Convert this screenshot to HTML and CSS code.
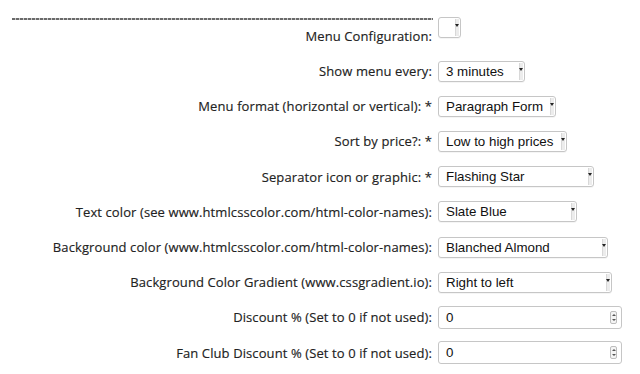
FILE: index.html
```html
<!DOCTYPE html>
<html>
<head>
<meta charset="utf-8">
<link rel="stylesheet" href="styles.css">
</head>
<body>
<div class="form">
  <div class="row first">
    <div class="label">
      <div class="dashes"></div>
      <div class="text">Menu Configuration:</div>
    </div>
    <div class="control"><div class="select" style="width:23px"><span class="val"></span><span class="arrow"><i></i></span></div></div>
  </div>
  <div class="row">
    <div class="label"><div class="text">Show menu every:</div></div>
    <div class="control"><div class="select" style="width:87px"><span class="val">3 minutes</span><span class="arrow"><i></i></span></div></div>
  </div>
  <div class="row">
    <div class="label"><div class="text">Menu format (horizontal or vertical): *</div></div>
    <div class="control"><div class="select" style="width:118px"><span class="val">Paragraph Form</span><span class="arrow"><i></i></span></div></div>
  </div>
  <div class="row">
    <div class="label"><div class="text">Sort by price?: *</div></div>
    <div class="control"><div class="select" style="width:129px"><span class="val">Low to high prices</span><span class="arrow"><i></i></span></div></div>
  </div>
  <div class="row">
    <div class="label"><div class="text">Separator icon or graphic: *</div></div>
    <div class="control"><div class="select" style="width:156px"><span class="val">Flashing Star</span><span class="arrow"><i></i></span></div></div>
  </div>
  <div class="row">
    <div class="label"><div class="text">Text color (see www.htmlcsscolor.com/html-color-names):</div></div>
    <div class="control"><div class="select" style="width:139px"><span class="val">Slate Blue</span><span class="arrow"><i></i></span></div></div>
  </div>
  <div class="row">
    <div class="label"><div class="text">Background color (www.htmlcsscolor.com/html-color-names):</div></div>
    <div class="control"><div class="select" style="width:170px"><span class="val">Blanched Almond</span><span class="arrow"><i></i></span></div></div>
  </div>
  <div class="row">
    <div class="label"><div class="text">Background Color Gradient (www.cssgradient.io):</div></div>
    <div class="control"><div class="select" style="width:174px"><span class="val">Right to left</span><span class="arrow"><i></i></span></div></div>
  </div>
  <div class="row">
    <div class="label"><div class="text">Discount % (Set to 0 if not used):</div></div>
    <div class="control"><div class="number"><span class="val">0</span><span class="spin"><b class="up"></b><b class="down"></b></span></div></div>
  </div>
  <div class="row">
    <div class="label"><div class="text">Fan Club Discount % (Set to 0 if not used):</div></div>
    <div class="control"><div class="number"><span class="val">0</span><span class="spin"><b class="up"></b><b class="down"></b></span></div></div>
  </div>
</div>
</body>
</html>
```

FILE: styles.css
```css
* { box-sizing: border-box; }
html, body { margin: 0; padding: 0; background: #fff; }
body { width: 640px; height: 374px; overflow: hidden; }

.form {
  padding-top: 12px;
  padding-left: 12px;
}

.row {
  display: grid;
  grid-template-columns: 420px auto;
  column-gap: 6px;
  height: 35.2px;
  align-items: center;
}

.row.first {
  height: 41.5px;
  align-items: start;
}

.label {
  text-align: right;
  font-family: "Open Sans", "DejaVu Sans", sans-serif;
  font-size: 13px;
  font-weight: 500;
  color: #222;
  letter-spacing: 0.1px;
  white-space: nowrap;
  -webkit-text-stroke: 0.15px #222;
}

.label .text { line-height: 20px; }

.dashes {
  height: 2px;
  margin-top: 6px;
  margin-bottom: 6px;
  margin-right: -1px;
  background: repeating-linear-gradient(to right, #6a6a6a 0 3px, #c8c8c8 3px 4px);
}

.first .control { padding-top: 5px; }

.select {
  display: flex;
  align-items: center;
  height: 21px;
  border: 1px solid #c6c6c6;
  border-radius: 3px;
  background: #fff;
  font-family: "Liberation Sans", Arial, sans-serif;
  font-size: 13.33px;
  color: #111;
  position: relative;
  box-shadow: 0 1px 0 rgba(0,0,0,0.04);
}

.select .val {
  flex: 1;
  padding-left: 7px;
  white-space: nowrap;
  overflow: hidden;
}

.select .arrow {
  width: 4px;
  height: 17px;
  margin-right: 1px;
  background: #ececec;
  border-left: 1px solid #d8d8d8;
  position: relative;
}

.select .arrow i {
  position: absolute;
  left: -1px;
  top: 5px;
  width: 0;
  height: 0;
  border-left: 2.5px solid transparent;
  border-right: 2.5px solid transparent;
  border-top: 3px solid #222;
}

.number {
  display: flex;
  align-items: center;
  width: 184px;
  height: 23px;
  border: 1px solid #c6c6c6;
  border-radius: 3px;
  background: #fff;
  font-family: "Liberation Sans", Arial, sans-serif;
  font-size: 13.33px;
  color: #111;
}

.number .val {
  flex: 1;
  padding-left: 7px;
}

.number .spin {
  width: 7px;
  height: 13px;
  margin-right: 4px;
  border: 1px solid #bdbdbd;
  border-radius: 2px;
  background: #f4f4f4;
  display: flex;
  flex-direction: column;
  align-items: center;
  justify-content: space-around;
}

.number .spin b {
  display: block;
  width: 0;
  height: 0;
  border-left: 2px solid transparent;
  border-right: 2px solid transparent;
}

.number .spin .up { border-bottom: 2px solid #555; }
.number .spin .down { border-top: 2px solid #555; }
```
